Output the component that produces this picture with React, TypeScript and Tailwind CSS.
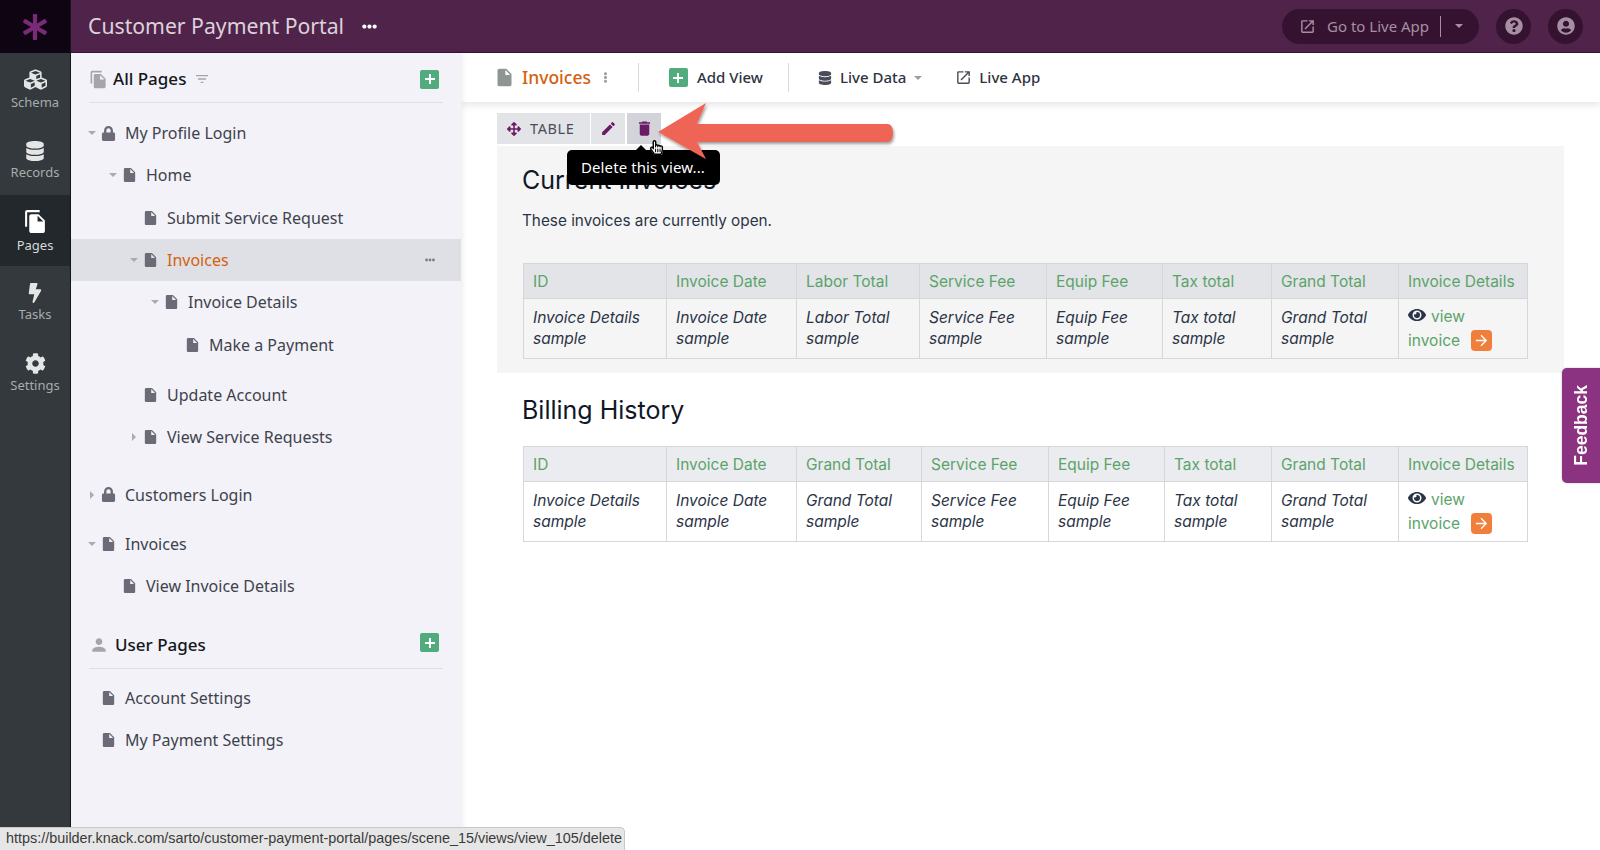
import { FaArrowsAlt, FaAsterisk, FaBolt, FaCog, FaCubes, FaDatabase, FaEllipsisH, FaEllipsisV, FaEye, FaHandPointer, FaLock, FaQuestionCircle, FaRegHandPointer, FaUserCircle } from "react-icons/fa";
import { MdArrowForward, MdDelete, MdEdit, MdFileCopy, MdFilterList, MdInsertDriveFile, MdOpenInNew, MdPerson } from "react-icons/md";

const plexFont = "font-['Noto_Sans','Open_Sans',sans-serif]";
const tableFont = "font-['Inter',sans-serif]";

const depthPad = ["pl-[15px]", "pl-[36px]", "pl-[57px]", "pl-[78px]", "pl-[99px]"];

function PlusButton() {
  return (
    <span className="flex h-[19px] w-[19px] items-center justify-center rounded-[2px] bg-[#52ab7c]">
      <svg viewBox="0 0 12 12" className="h-[12px] w-[12px]"><path d="M6 1v10M1 6h10" stroke="white" strokeWidth="2" /></svg>
    </span>
  );
}

function Caret({ dir }: { dir?: "down" | "right" }) {
  return (
    <span className="flex w-[12px] shrink-0 items-center justify-center">
      {dir === "down" && <span className="h-0 w-0 border-x-[4px] border-t-[4px] border-x-transparent border-t-[#a9abb3]" />}
      {dir === "right" && <span className="h-0 w-0 border-y-[4px] border-l-[4px] border-y-transparent border-l-[#a9abb3]" />}
    </span>
  );
}

interface RowProps {
  label: string;
  depth: number;
  caret?: "down" | "right";
  lock?: boolean;
  active?: boolean;
  className?: string;
}

function TreeRow({ label, depth, caret, lock, active, className = "" }: RowProps) {
  return (
    <div className={`flex h-[42.33px] items-center ${depthPad[depth]} ${active ? "bg-[#dfe0e5]" : ""} ${className}`}>
      <Caret dir={caret} />
      <span className="ml-[2px] flex w-[17px] shrink-0 items-center justify-center text-[#6a6b76]">
        {lock ? <FaLock className="text-[15px]" /> : <MdInsertDriveFile className="text-[20px]" />}
      </span>
      <span className={`ml-[8px] text-[16px] ${active ? "text-[#d4600f]" : "text-[#3f424c]"}`}>{label}</span>
      {active && <FaEllipsisH className="ml-auto mr-[26px] text-[10px] text-[#7c7e88]" />}
    </div>
  );
}

const railItems = [
  { label: "Schema", icon: <FaCubes className="text-[23px]" /> },
  { label: "Records", icon: <FaDatabase className="text-[20px]" /> },
  { label: "Pages", icon: <MdFileCopy className="text-[25px] text-white" />, active: true },
  { label: "Tasks", icon: <FaBolt className="text-[20px]" /> },
  { label: "Settings", icon: <FaCog className="text-[21px]" /> },
];

function Rail() {
  return (
    <div className={`flex w-[71px] shrink-0 flex-col border-r border-[#14181a] bg-[#33393c] ${plexFont}`}>
      <div className="flex h-[53px] shrink-0 items-center justify-center bg-[#0e0412] text-[26px] text-[#7a2a78]">
        <FaAsterisk />
      </div>
      {railItems.map((item) => (
        <div
          key={item.label}
          className={`flex h-[71px] flex-col items-center justify-center gap-[3px] pt-[1px] text-[#e3e5e6] ${item.active ? "bg-[#22282b]" : ""}`}
        >
          {item.icon}
          <span className={`text-[13px] leading-[16px] ${item.active ? "text-[#d6d9da]" : "text-[#a7acae]"}`}>{item.label}</span>
        </div>
      ))}
    </div>
  );
}

function Sidebar() {
  return (
    <aside className={`z-10 flex w-[390px] shrink-0 flex-col bg-[#f2f2f8] shadow-[2px_0_5px_rgba(0,0,0,0.07)] ${plexFont}`}>
      <div className="mx-[18px] flex h-[50px] shrink-0 items-center border-b border-[#dfe0e5] pt-[3px]">
        <MdFileCopy className="text-[19px] text-[#a4a5ad]" />
        <span className="ml-[5px] text-[17px] font-medium text-[#14161c]">All Pages</span>
        <MdFilterList className="ml-[8px] text-[16px] text-[#a4a5ad]" />
        <span className="ml-auto mr-[4px]"><PlusButton /></span>
      </div>
      <div className="mt-[9px]">
        <TreeRow label="My Profile Login" depth={0} caret="down" lock />
        <TreeRow label="Home" depth={1} caret="down" />
        <TreeRow label="Submit Service Request" depth={2} />
        <TreeRow label="Invoices" depth={2} caret="down" active />
        <TreeRow label="Invoice Details" depth={3} caret="down" />
        <TreeRow label="Make a Payment" depth={4} />
        <TreeRow label="Update Account" depth={2} className="mt-[8px]" />
        <TreeRow label="View Service Requests" depth={2} caret="right" />
        <TreeRow label="Customers Login" depth={0} caret="right" lock className="mt-[15px]" />
        <TreeRow label="Invoices" depth={0} caret="down" className="mt-[7px]" />
        <TreeRow label="View Invoice Details" depth={1} />
      </div>
      <div className="mx-[18px] mt-[16px] flex h-[45px] shrink-0 items-center border-b border-[#dfe0e5] pb-[1px]">
        <MdPerson className="text-[20px] text-[#a4a5ad]" />
        <span className="ml-[6px] text-[17px] font-medium text-[#14161c]">User Pages</span>
        <span className="ml-auto mb-[5px] mr-[4px]"><PlusButton /></span>
      </div>
      <div className="mt-[8px]">
        <TreeRow label="Account Settings" depth={0} />
        <TreeRow label="My Payment Settings" depth={0} />
      </div>
    </aside>
  );
}

function Header() {
  return (
    <header className={`flex h-[53px] flex-1 items-center border-b border-[#3a1535] bg-[#50244a] ${plexFont}`}>
      <span className="ml-[17px] text-[21.2px] text-[#dcd2db]">Customer Payment Portal</span>
      <FaEllipsisH className="ml-[18px] text-[15px] text-white" />
      <div className="ml-auto flex h-[35px] w-[197px] items-center rounded-full bg-[#351330] text-[#a68fa3]">
        <MdOpenInNew className="ml-[17px] text-[17px]" />
        <span className="ml-[11px] text-[15px]">Go to Live App</span>
        <span className="ml-[11px] h-[21px] w-px bg-[#a68fa3]" />
        <span className="ml-[14px] h-0 w-0 border-x-[4px] border-t-[4px] border-x-transparent border-t-[#a68fa3]" />
      </div>
      <span className="ml-[17px] flex h-[35px] w-[35px] items-center justify-center rounded-full bg-[#351330] text-[18px] text-[#a68fa3]"><FaQuestionCircle /></span>
      <span className="ml-[17px] mr-[17px] flex h-[35px] w-[35px] items-center justify-center rounded-full bg-[#351330] text-[18px] text-[#a68fa3]"><FaUserCircle /></span>
    </header>
  );
}

function TopBar() {
  return (
    <div className={`relative z-[5] flex h-[49px] shrink-0 items-center bg-white text-[#2f3340] shadow-[0_2px_8px_rgba(0,0,0,0.12)] ${plexFont}`}>
      <MdInsertDriveFile className="ml-[33px] text-[21px] text-[#8f9595]" />
      <span className="ml-[7px] text-[17.5px] font-medium text-[#d4600f]">Invoices</span>
      <FaEllipsisV className="ml-[9px] text-[11px] text-[#9a9ea3]" />
      <span className="ml-[27px] h-[29px] w-px bg-[#d8d9dc]" />
      <span className="ml-[30px] flex h-[19px] w-[19px] items-center justify-center rounded-[2px] bg-[#52ab7c]">
        <svg viewBox="0 0 12 12" className="h-[12px] w-[12px]"><path d="M6 1v10M1 6h10" stroke="white" strokeWidth="2" /></svg>
      </span>
      <span className="ml-[9px] text-[15px] font-medium">Add View</span>
      <span className="ml-[25px] h-[29px] w-px bg-[#d8d9dc]" />
      <FaDatabase className="ml-[29px] text-[14px] text-[#4a4d59]" />
      <span className="ml-[8px] text-[15px] font-medium">Live Data</span>
      <span className="ml-[8px] h-0 w-0 border-x-[4px] border-t-[4px] border-x-transparent border-t-[#9a9ea3]" />
      <MdOpenInNew className="ml-[33px] text-[17px] text-[#4a4d59]" />
      <span className="ml-[7px] text-[15px] font-medium">Live App</span>
    </div>
  );
}

const table1Cols = [143, 130, 123, 127, 116, 109, 127, 129];
const table2Cols = [143, 130, 125, 127, 116, 107, 127, 129];

function ViewLink() {
  return (
    <div className="pt-[1px] not-italic leading-[24px] text-[#5ba36a]">
      <FaEye className="mr-[5px] inline-block align-[-2px] text-[18px] text-[#2b3446]" />
      view
      <br />
      invoice
      <span className="ml-[11px] inline-flex h-[21px] w-[21px] items-center justify-center rounded-[4px] bg-[#f07f3c] align-[-3px] text-[17px] text-white">
        <MdArrowForward />
      </span>
    </div>
  );
}

function InvoiceTable({ cols, heads, samples, headBg, bodyBg }: { cols: number[]; heads: string[]; samples: string[]; headBg: string; bodyBg: string }) {
  return (
    <table className={`w-[1004px] table-fixed border-collapse text-[15.5px] ${tableFont}`}>
      <colgroup>
        {cols.map((w, i) => (
          <col key={i} style={{ width: w }} />
        ))}
      </colgroup>
      <thead>
        <tr className={`h-[35px] ${headBg}`}>
          {heads.map((h, i) => (
            <th key={i} className="border border-[#d6d7d9] px-[9px] pt-[1px] text-left font-normal text-[#5ba36a]">{h}</th>
          ))}
        </tr>
      </thead>
      <tbody>
        <tr className={`h-[60px] ${bodyBg}`}>
          {samples.map((s, i) => (
            <td key={i} className="border border-[#d6d7d9] px-[9px] pb-[2px] align-middle leading-[21px] italic text-[#2b3446]">{s}</td>
          ))}
          <td className="border border-[#d6d7d9] px-[9px] align-middle"><ViewLink /></td>
        </tr>
      </tbody>
    </table>
  );
}

function Toolbar() {
  return (
    <div className={`ml-[36px] mt-[11px] flex h-[31px] items-center gap-[1px] text-[#6a1b63] ${plexFont}`}>
      <div className="flex h-full w-[93px] items-center bg-[#e3e4e8]">
        <FaArrowsAlt className="ml-[10px] text-[14px]" />
        <span className="ml-[9px] text-[14.5px] tracking-[0.6px] text-[#4a4d59]">TABLE</span>
      </div>
      <div className="flex h-full w-[34px] items-center justify-center bg-[#e3e4e8] text-[17px]"><MdEdit /></div>
      <div className="ml-[1px] flex h-full w-[34px] items-center justify-center bg-[#d3d4da] text-[19px]"><MdDelete /></div>
    </div>
  );
}

function DeleteOverlay() {
  return (
    <>
      <div className={`absolute left-[567px] top-[150px] z-20 rounded-[5px] bg-black py-[7px] pl-[14px] pr-[15px] text-[15px] leading-[21px] tracking-[0.1px] text-white ${plexFont}`}>
        <span className="absolute left-[68px] top-[-5px] h-0 w-0 border-x-[6px] border-b-[6px] border-x-transparent border-b-black" />
        Delete this view...
      </div>
      <svg className="absolute left-[650px] top-[95px] z-30 overflow-visible" width="250" height="72" viewBox="0 0 250 72">
        <defs>
          <filter id="arrowShadow" x="-10%" y="-20%" width="120%" height="150%">
            <feDropShadow dx="1" dy="2" stdDeviation="1.5" floodColor="#000" floodOpacity="0.4" />
          </filter>
        </defs>
        <path
          d="M8 37 L56 8 L47 29 L237 29 Q243 29 243 38 Q243 47 237 47 L47 47 L56 64 Z"
          fill="#ef6555"
          filter="url(#arrowShadow)"
        />
      </svg>
      <div className="absolute left-[649px] top-[140px] z-30 text-[15px]">
        <FaHandPointer className="absolute text-white" />
        <FaRegHandPointer className="absolute text-black" />
      </div>
    </>
  );
}

export default function App() {
  const heads1 = ["ID", "Invoice Date", "Labor Total", "Service Fee", "Equip Fee", "Tax total", "Grand Total", "Invoice Details"];
  const samples1 = ["Invoice Details sample", "Invoice Date sample", "Labor Total sample", "Service Fee sample", "Equip Fee sample", "Tax total sample", "Grand Total sample"];
  const heads2 = ["ID", "Invoice Date", "Grand Total", "Service Fee", "Equip Fee", "Tax total", "Grand Total", "Invoice Details"];
  const samples2 = ["Invoice Details sample", "Invoice Date sample", "Grand Total sample", "Service Fee sample", "Equip Fee sample", "Tax total sample", "Grand Total sample"];

  return (
    <div className="relative flex h-[850px] w-[1600px] overflow-hidden bg-white">
      <Rail />
      <div className="flex min-w-0 flex-1 flex-col">
        <div className="flex h-[53px] shrink-0"><Header /></div>
        <div className="flex min-h-0 flex-1">
          <Sidebar />
          <main className={`flex min-w-0 flex-1 flex-col ${tableFont}`}>
            <TopBar />
            <Toolbar />
            <section className="ml-[36px] mr-[36px] mt-[2px] h-[227px] shrink-0 bg-[#f5f5f5] pl-[26px]">
              <h2 className="-ml-px pt-[16px] text-[25px] leading-[36px] text-[#101828]">Current Invoices</h2>
              <p className="-ml-px mt-[12px] text-[15.3px] leading-[22px] text-[#2b3446]">These invoices are currently open.</p>
              <div className="mt-[31px]">
                <InvoiceTable cols={table1Cols} heads={heads1} samples={samples1} headBg="bg-[#e3e4e8]" bodyBg="bg-[#f5f5f5]" />
              </div>
            </section>
            <section className="ml-[62px] mt-[19px]">
              <h2 className="-ml-px text-[25px] leading-[36px] text-[#101828]">Billing History</h2>
              <div className="mt-[18px]">
                <InvoiceTable cols={table2Cols} heads={heads2} samples={samples2} headBg="bg-[#ebecef]" bodyBg="bg-white" />
              </div>
            </section>
          </main>
        </div>
      </div>
      <DeleteOverlay />
      <div className="absolute left-[1562px] top-[368px] z-20 flex h-[115px] w-[38px] items-center justify-center rounded-l-[5px] bg-[#8b3380] shadow-[0_0_2px_rgba(0,0,0,0.3)]">
        <span className="rotate-180 text-[17.5px] font-bold text-white [writing-mode:vertical-rl] font-['Liberation_Sans',sans-serif]">Feedback</span>
      </div>
      <div className="absolute bottom-0 left-0 z-40 flex h-[23px] w-[625px] items-center rounded-tr-[5px] border-r border-t border-[#c8c8c8] bg-[#e6e6e6] pl-[6px] text-[14.4px] text-[#3a3a3a] font-['Liberation_Sans',sans-serif]">
        https://builder.knack.com/sarto/customer-payment-portal/pages/scene_15/views/view_105/delete
      </div>
    </div>
  );
}
